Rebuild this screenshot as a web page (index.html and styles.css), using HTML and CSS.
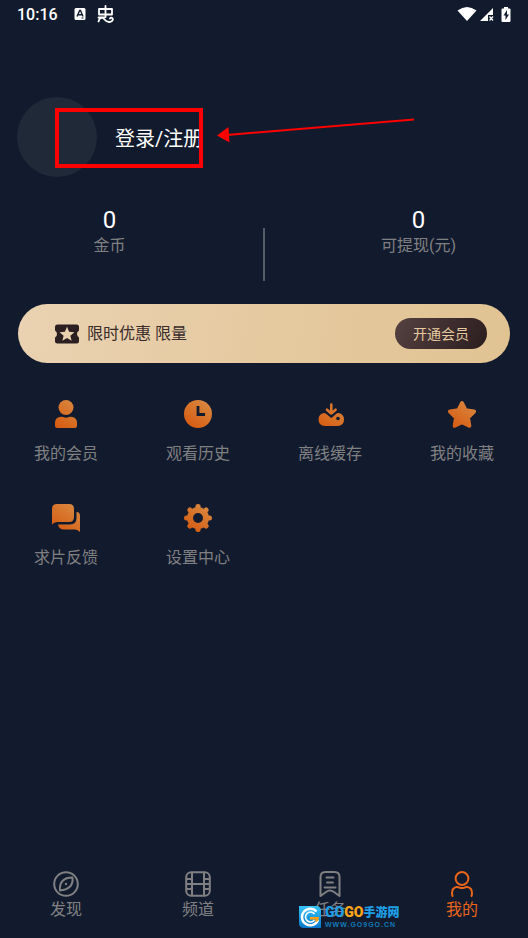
FILE: index.html
```html
<!DOCTYPE html>
<html lang="zh-CN">
<head>
<meta charset="utf-8">
<meta name="viewport" content="width=device-width, initial-scale=1">
<title>我的</title>
<link rel="stylesheet" href="styles.css">
</head>
<body>
<svg class="defs" aria-hidden="true">
  <defs>
    <linearGradient id="orange" gradientUnits="userSpaceOnUse" x1="24" y1="2" x2="6" y2="27">
      <stop offset="0" stop-color="#d98840"/><stop offset="1" stop-color="#d65c12"/>
    </linearGradient>
    <linearGradient id="blue" x1="0" y1="0" x2="0" y2="1">
      <stop offset="0" stop-color="#35c6fa"/><stop offset="1" stop-color="#0876c9"/>
    </linearGradient>
  </defs>
</svg>

<header class="status">
  <div class="status-group">
    <span class="time">10:16</span>
    <svg class="status-a" width="12" height="12" viewBox="0 0 12 12"><rect x="0.5" width="11" height="12" rx="1.5" fill="#fff"/><path d="M3 8.5 5.7 2.5h.8L9 8.5M4.2 6.7h3.6" fill="none" stroke="#121b2d" stroke-width="1.4"/><path d="M7.500 10h2" stroke="#121b2d"/></svg>
    <svg width="18" height="18" viewBox="0 0 18 18" fill="none" stroke="#fff" stroke-width="1.8" stroke-linecap="round" stroke-linejoin="round"><path d="M8.500 1v11M2 4h13v5.500H2zM1.500 16.500c1-4 3.500-5 5.500-2.500s5 4 8 2c2-2.500-.5-4.500-2-2.500"/><path d="M1.500 12.500h6"/></svg>
  </div>
  <div class="status-group status-right">
    <svg width="20" height="14" viewBox="0 0 20 14"><path d="M.5 3.500Q10-3.500 19.500 3.500L10 14Z" fill="#fff"/></svg>
    <svg width="14" height="14" viewBox="0 0 14 14"><path d="M0 14 13 1v7H8v6Z" fill="#fff"/><path d="m9.500 9.500 3.500 4m0-4-3.500 4" stroke="#fff" stroke-width="1.300"/></svg>
    <svg class="battery" width="10" height="15" viewBox="0 0 10 15"><path d="M3 0h4v1.500h1.500q1 0 1 1v11.500q0 1-1 1h-7q-1 0-1-1V2.500q0-1 1-1H3Z" fill="#fff"/><path d="M6 3 2.500 8.500h2V13L8 7.500H6Z" fill="#121b2d"/></svg>
  </div>
</header>

<main>
  <section class="profile">
    <div class="avatar"></div>
    <a class="login" href="#">登录/注册</a>
    <div class="callout"></div>
    <svg class="arrow" width="200" height="28" viewBox="0 0 200 28"><path d="M10 20 197 4.500" stroke="#f00" stroke-width="2"/><path d="M0 20.500 11.500 12 12.500 27.500Z" fill="#f00"/></svg>
  </section>

  <section class="stats">
    <div class="stat"><span class="value">0</span><span class="caption">金币</span></div>
    <div class="divider"></div>
    <div class="stat"><span class="value">0</span><span class="caption">可提现(元)</span></div>
  </section>

  <section class="vip">
    <svg width="24" height="20" viewBox="0 0 24 20"><path d="M2.500.5h19Q24 .5 24 3v3.500q-2 1.200-2 3.500t2 3.500V17q0 2.500-2.500 2.500h-19Q0 19.500 0 17v-3.500q2-1.200 2-3.500T0 6.500V3Q0 .5 2.500.5Z" fill="#2b1f21"/><path d="m12 2.800 2.100 4.900 5.300.5-4 3.500 1.200 5.100-4.600-2.700-4.600 2.700 1.200-5.100-4-3.500 5.300-.5Z" fill="#e8d0ae"/></svg>
    <span class="promo">限时优惠 限量</span>
    <button class="join" type="button">开通会员</button>
  </section>

  <section class="menu">
    <a class="item" href="#">
      <svg width="28" height="28" viewBox="0 0 28 28" fill="url(#orange)"><circle cx="14" cy="7.500" r="7.500"/><path d="M7.500 17Q10 16.300 11 17q3 1.500 6 0 1-.7 3.500 0Q25 18 25 23v2.500q0 2.500-2.500 2.500h-17Q3 28 3 25.500V23q0-5 4.500-6Z"/></svg>
      <span>我的会员</span></a>
    <a class="item" href="#">
      <svg width="28" height="28" viewBox="0 0 28 28"><circle cx="14" cy="14" r="14" fill="url(#orange)"/><path d="M14 6v8.500h7" fill="none" stroke="#121b2d" stroke-width="2.800"/></svg>
      <span>观看历史</span></a>
    <a class="item" href="#">
      <svg width="28" height="28" viewBox="0 0 28 28"><path d="M8 13q1.500 0 3 1.500l3 2.500q1.300 1 2.600 0L20 14q1-1 2.500-1 5.500 1 5.500 6.500 0 6.500-6.500 6.500H9q-6.500 0-6.500-6.500Q2.500 14 8 13Z" fill="url(#orange)"/><path d="M15.300 5v8.500M11 10l4.300 4.300L19.600 10" fill="none" stroke="#121b2d" stroke-width="5" stroke-linecap="round"/><path d="M15.300 4.500v9M11 9.700l4.300 3.800 4.300-3.800" fill="none" stroke="#d9742a" stroke-width="2.600" stroke-linecap="round" stroke-linejoin="round"/><circle cx="22" cy="18.500" r="1.800" fill="#121b2d"/></svg>
      <span>离线缓存</span></a>
    <a class="item" href="#">
      <svg width="28" height="28" viewBox="0 0 28 28"><path d="m14 3 3.500 7.200 8.500 1.300-6 6 1.300 8.300-7.300-3.600-7.300 3.600L8 17.500l-6-6 8.500-1.300Z" fill="url(#orange)" stroke="url(#orange)" stroke-width="4" stroke-linejoin="round"/></svg>
      <span>我的收藏</span></a>
    <a class="item" href="#">
      <svg width="28" height="28" viewBox="0 0 28 28" fill="url(#orange)"><path d="M5 0h12q5 0 5 5v8q0 5-5 5H5q-3 0-5 2.500V5Q0 0 5 0Z"/><path d="M24.500 8q3.500 0 3.500 4v16q-2-2.500-5-2.500H12q-5 0-6-5h12q6.500 0 6.500-6.500Z"/></svg>
      <span>求片反馈</span></a>
    <a class="item" href="#">
      <svg width="28" height="28" viewBox="0 0 28 28"><g fill="url(#orange)"><circle cx="14" cy="14" r="11"/><path d="M5.900 5.900l16.200 16.200M22.100 5.900 5.900 22.100" stroke="url(#orange)" stroke-width="5" stroke-linecap="round"/><path d="M13.900 2.500h.2v23h-.2ZM2.500 13.900h23v.2h-23Z" stroke="url(#orange)" stroke-width="5" stroke-linejoin="round"/></g><circle cx="14" cy="14" r="5" fill="#121b2d"/></svg>
      <span>设置中心</span></a>
  </section>
</main>

<nav class="tabs">
  <a class="tab" href="#">
    <svg width="26" height="26" viewBox="0 0 26 26" fill="none" stroke="currentColor" stroke-width="2"><circle cx="13" cy="13" r="11.800"/><path d="M19.500 6.500q.7 6-2.700 9.300T7 19.500q-.7-6.500 2.700-9.800t9.800-3.200Z" stroke-linejoin="round"/><circle cx="13" cy="13" r="1.200" fill="currentColor" stroke="none"/></svg>
    <span>发现</span></a>
  <a class="tab" href="#">
    <svg width="26" height="26" viewBox="0 0 26 26" fill="none" stroke="currentColor" stroke-width="2"><rect x="1.200" y="1.200" width="23.600" height="23.600" rx="5"/><path d="M7 1v24M19 1v24M7 13h12M1 8h6M1 13h6M1 18h6M19 8h6M19 13h6M19 18h6"/></svg>
    <span>频道</span></a>
  <a class="tab" href="#">
    <svg width="26" height="26" viewBox="0 0 26 26" fill="none" stroke="currentColor" stroke-width="2" stroke-linejoin="round"><path d="M3.500 25V6q0-5 5-5h9q5 0 5 5v19l-5.500-4q-4-3-8 0Z"/><path d="M9.500 6.500h7M10 11.500h6M7.500 16.500h11" stroke-linecap="round"/></svg>
    <span>任务</span></a>
  <a class="tab active" href="#">
    <svg width="26" height="26" viewBox="0 0 26 26" fill="none" stroke="currentColor" stroke-width="2" stroke-linecap="round"><circle cx="13" cy="7.500" r="6.400"/><path d="M3.500 25Q3 23.500 3 22q0-5 4.500-6 1.500-.3 3 .6 2.500 1 5 0 1.500-.9 3-.6 4.500 1 4.500 6 0 1.500-.5 3"/></svg>
    <span>我的</span></a>
  <div class="mark">
    <svg width="24" height="24" viewBox="0 0 24 24"><path d="M1 1h17q5 0 5 5v17H6q-5 0-5-5Z" fill="url(#blue)"/><path d="M18.500 6.500A8.300 8.300 0 1 0 20 15" fill="none" stroke="#fff" stroke-width="2.400"/><path d="M16.500 9a5 5 0 1 0 0 6" fill="none" stroke="#fff" stroke-width="1.600"/><path d="M12 12h9q0 4-3.500 5.500v-3H12Z" fill="#ff9d13"/></svg>
    <div class="mark-text">
      <div class="mark-name"><b class="go">GO</b><b class="go warm">GO</b><b>手游网</b></div>
      <span class="mark-url">WWW.GO9GO.CN</span>
    </div>
  </div>
</nav>
</body>
</html>
```
FILE: styles.css
```css
* { box-sizing: border-box; }

body {
  margin: 0;
  min-height: 100vh;
  display: flex;
  flex-direction: column;
  background: #121b2d;
  color: #808083;
  font: 16px/24px Roboto, "Noto Sans CJK SC", sans-serif;
}

a { color: inherit; text-decoration: none; }
svg { display: block; flex: none; }
.defs { position: absolute; width: 0; height: 0; }
main { flex: 1; }

.status {
  display: flex;
  justify-content: space-between;
  height: 28px;
  padding: 0 17px;
  color: #fff;
}
.status-group { display: flex; align-items: center; }
.time { font-size: 16px; font-weight: 500; line-height: 28px; padding-top: 2px; }
.status-a { margin: 0 11px 0 16px; }
.status-right { gap: 3px; }
.battery { margin-left: 4px; }

.profile {
  position: relative;
  display: flex;
  align-items: center;
  gap: 18px;
  margin-top: 69px;
  padding: 0 17px;
}
.avatar { width: 80px; height: 80px; border-radius: 50%; background: #202938; }
.login { padding-top: 4px; color: #fff; font-size: 20px; line-height: 28px; }
.callout {
  position: absolute;
  left: 55px;
  top: 11px;
  width: 148px;
  height: 60px;
  border: 4px solid #f00;
}
.arrow { position: absolute; left: 217px; top: 18px; }

.stats {
  display: grid;
  grid-template-columns: 1fr 2px 1fr;
  margin-top: 31px;
}
.stat { display: flex; flex-direction: column; align-items: center; }
.stat:first-child { padding-right: 44px; }
.stat:last-child { padding-left: 44px; }
.value { color: #fff; font-size: 24px; line-height: 24px; }
.caption { line-height: 28px; }
.divider { height: 53px; margin-top: 20px; background: #555b67; }

.vip {
  display: flex;
  align-items: center;
  height: 59px;
  margin: 23px 18px 0;
  padding: 0 23px 0 37px;
  border-radius: 30px;
  background: linear-gradient(100deg, #ead2b2, #e5caa0 50%, #e1c393);
}
.promo { margin-left: 8px; color: #392c2b; }
.join {
  margin-left: auto;
  width: 92px;
  height: 31px;
  padding: 0;
  border: 0;
  border-radius: 16px;
  background: linear-gradient(120deg, #554142, #2b1d1e);
  color: #e5caa0;
  font: 14px/20px Roboto, "Noto Sans CJK SC", sans-serif;
}

.menu {
  display: grid;
  grid-template-columns: repeat(4, 1fr);
  row-gap: 38px;
  margin-top: 37px;
}
.item { display: flex; flex-direction: column; align-items: center; gap: 14px; }

.tabs {
  position: relative;
  display: grid;
  grid-template-columns: repeat(4, 1fr);
  padding: 17px 0 16px;
  border-top: 1px solid #111827;
}
.tab { display: flex; flex-direction: column; align-items: center; gap: 1px; }
.active { color: #e8651b; }

.mark {
  position: absolute;
  left: 298px;
  bottom: 9px;
  display: flex;
  align-items: center;
  gap: 3px;
}
.mark-name {
  display: flex;
  align-items: center;
  height: 17px;
  color: #1f9ee6;
  font-size: 12px;
  font-weight: 900;
}
.go { font: 900 14px/17px Roboto, sans-serif; }
.warm { color: #ffa516; }
.mark-url { display: block; color: #1579b8; font: bold 7px/8px "Liberation Sans", sans-serif; letter-spacing: 1px; }
```
